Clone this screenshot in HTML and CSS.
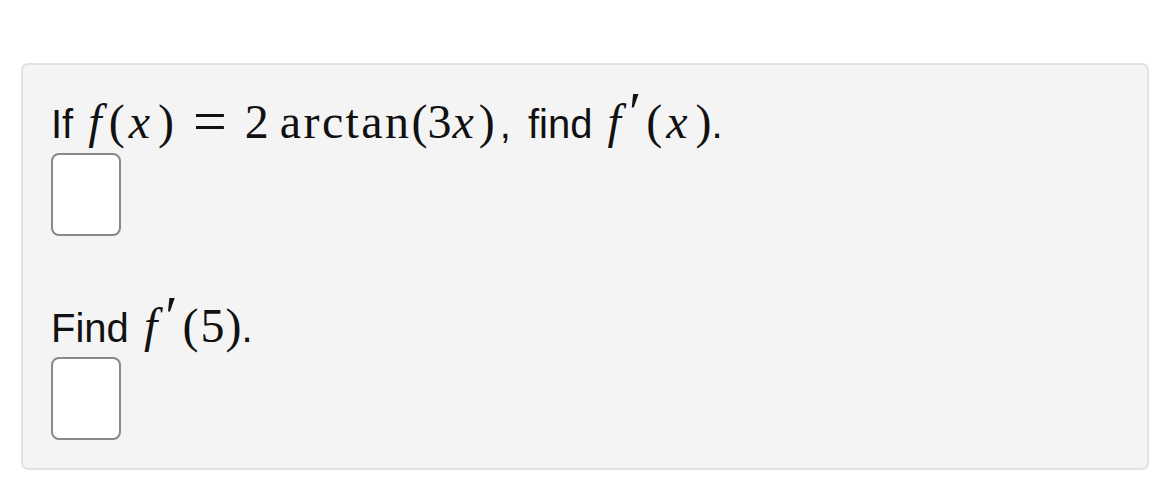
FILE: index.html
```html
<!DOCTYPE html>
<html lang="en">
<head>
<meta charset="utf-8">
<title>Derivative question</title>
<link rel="stylesheet" href="styles.css">
</head>
<body>
<div class="page">
  <div class="card">
    <p class="line">If <span class="math lead"><i class="mi f">f</i><span class="mo open">(</span><i class="mi x">x</i><span class="mo close">)</span><span class="rel">=</span><span class="mn two">2</span><span class="op">arctan</span><span class="mo open">(</span><span class="mn three">3</span><i class="mi x inner">x</i><span class="mo close">)</span></span><span class="comma">,</span> find <span class="math"><i class="mi f">f</i><span class="prime">′</span><span class="mo open">(</span><i class="mi x">x</i><span class="mo close">)</span></span>.</p>
    <div class="answer"></div>
    <p class="line second">Find <span class="math"><i class="mi f">f</i><span class="prime">′</span><span class="mo open">(</span><span class="mn five">5</span><span class="mo close">)</span></span>.</p>
    <div class="answer"></div>
  </div>
</div>
</body>
</html>
```
FILE: styles.css
```css
html, body {
  margin: 0;
  padding: 0;
  background: #ffffff;
}

.page {
  padding: 63px 21px 0 21px;
}

.card {
  box-sizing: border-box;
  width: 1128px;
  height: 407px;
  background: #f4f4f4;
  border: 2px solid #e2e2e2;
  border-radius: 7px;
  padding: 31px 28px 28px 28px;
  font-family: "Liberation Sans", Arial, sans-serif;
  font-size: 40px;
  line-height: 56px;
  color: #111111;
}

.line {
  margin: 0;
  white-space: nowrap;
}

.second {
  margin-top: 64px;
}

.answer {
  box-sizing: border-box;
  width: 70px;
  height: 83px;
  margin-top: 1px;
  background: #ffffff;
  border: 2px solid #898989;
  border-radius: 8px;
}

.math {
  font-family: "Liberation Serif", "Times New Roman", serif;
  font-size: 48px;
  line-height: 1;
}

.math.lead {
  margin-right: 5px;
}

.comma {
  margin-right: 6px;
}

.mi {
  font-style: italic;
  display: inline-block;
}

.mi.f {
  margin-left: 4px;
  margin-right: 7px;
}

.mi.x {
  margin-left: 4px;
  margin-right: 8px;
}

.mi.x.inner {
  margin-left: 2px;
  margin-right: 5px;
}

.mo {
  display: inline-block;
}

.mn {
  display: inline-block;
}

.mn.three {
  margin-left: 0;
  margin-right: -1px;
}

.mn.five {
  margin-left: 2px;
  margin-right: 1px;
}

.rel {
  font-size: 60px;
  line-height: 0;
  vertical-align: -3px;
  margin: 0 18px 0 19px;
}

.op {
  display: inline-block;
  margin-left: 11px;
  margin-right: 0;
  letter-spacing: 0.05em;
}

.prime {
  font-size: 56px;
  line-height: 0;
  vertical-align: 6px;
  margin-left: 1px;
  margin-right: 5px;
}
```
